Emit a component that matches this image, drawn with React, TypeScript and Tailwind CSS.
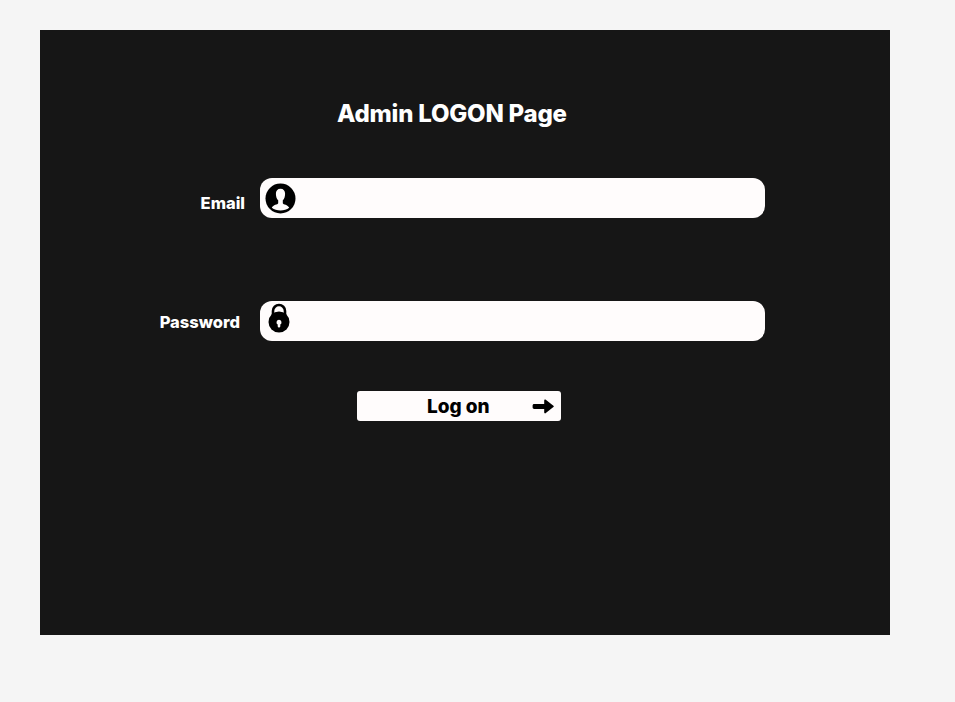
function UserIcon() {
  return (
    <svg className="ml-[5px] block h-[31px] w-[31px] shrink-0" viewBox="0 0 31 31" aria-hidden="true">
      <circle cx="15.5" cy="15.5" r="15" fill="#000" />
      <path
        d="M15.5 5.8c-3 0-4.6 2-4.6 5 0 2.9.9 5.3 2.3 6.5v3c-.5 1.5-5 1.3-6.4 4.5 2.4 1.8 5.3 2.6 8.7 2.6s6.3-.8 8.7-2.6c-1.4-3.2-5.9-3-6.4-4.5v-3c1.4-1.2 2.3-3.6 2.3-6.5 0-3-1.6-5-4.6-5Z"
        fill="#fffcfc"
      />
    </svg>
  );
}

function LockIcon() {
  return (
    <svg className="ml-2 mt-[2px] block h-[31px] w-[22px] shrink-0" viewBox="0 0 22 31" aria-hidden="true">
      <path d="M5 13V8a6 6 0 0 1 12 0V13" fill="none" stroke="#000" strokeWidth="2.6" />
      <circle cx="11" cy="19" r="10.5" fill="#000" />
      <path d="M11 16.8a2.6 2.6 0 0 0-1.3 4.8V23.3a1.3 1.3 0 0 0 2.6 0v-1.7a2.6 2.6 0 0 0-1.3-4.8Z" fill="#fffcfc" />
    </svg>
  );
}

function ArrowIcon() {
  return (
    <svg className="block h-4 w-6" viewBox="0 0 24 16" aria-hidden="true">
      <path
        d="M3.2 5.9h10V2.5c0-1 .9-1.4 1.6-.8l7.6 6c.5.4.5 1 0 1.4l-7.6 6c-.7.6-1.6.2-1.6-.8v-3.4h-10c-1 0-1.6-.6-1.6-1.6V7.5c0-1 .6-1.6 1.6-1.6Z"
        fill="#000"
      />
    </svg>
  );
}

export default function App() {
  return (
    <div className="h-[702px] w-[955px] bg-[#f5f5f5] pl-10 pt-[30px] font-['Inter',sans-serif] font-extrabold">
      <main className="h-[605px] w-[850px] bg-[#161616] pt-[66px] text-white">
        <h1 className="ml-[297px] h-9 whitespace-nowrap text-2xl leading-9 tracking-[-0.22px]">Admin LOGON Page</h1>
        <form onSubmit={(event) => event.preventDefault()}>
          <div className="mt-[46px] flex h-10">
            <label htmlFor="email" className="w-[205px] pt-[13px] text-right text-[16.5px] leading-6">
              Email
            </label>
            <div className="ml-[15px] flex w-[505px] items-center rounded-xl bg-[#fffcfc]">
              <UserIcon />
              <input id="email" type="email" className="h-full min-w-0 flex-1 bg-transparent px-2 text-black outline-none" />
            </div>
          </div>
          <div className="mt-[83px] flex h-10">
            <label htmlFor="password" className="w-[200px] pt-[9px] text-right text-[16.5px] leading-6">
              Password
            </label>
            <div className="ml-5 flex w-[505px] items-start rounded-xl bg-[#fffcfc]">
              <LockIcon />
              <input id="password" type="password" className="h-full min-w-0 flex-1 bg-transparent px-2 text-black outline-none" />
            </div>
          </div>
          <button
            type="submit"
            className="ml-[317px] mt-[50px] flex h-[30px] w-[204px] items-center justify-between rounded-[3px] bg-[#fffcfc] pl-[70px] pr-[6px] text-[19px] text-black"
          >
            <span className="whitespace-nowrap pt-[2px] leading-6">Log on</span>
            <ArrowIcon />
          </button>
        </form>
      </main>
    </div>
  );
}
